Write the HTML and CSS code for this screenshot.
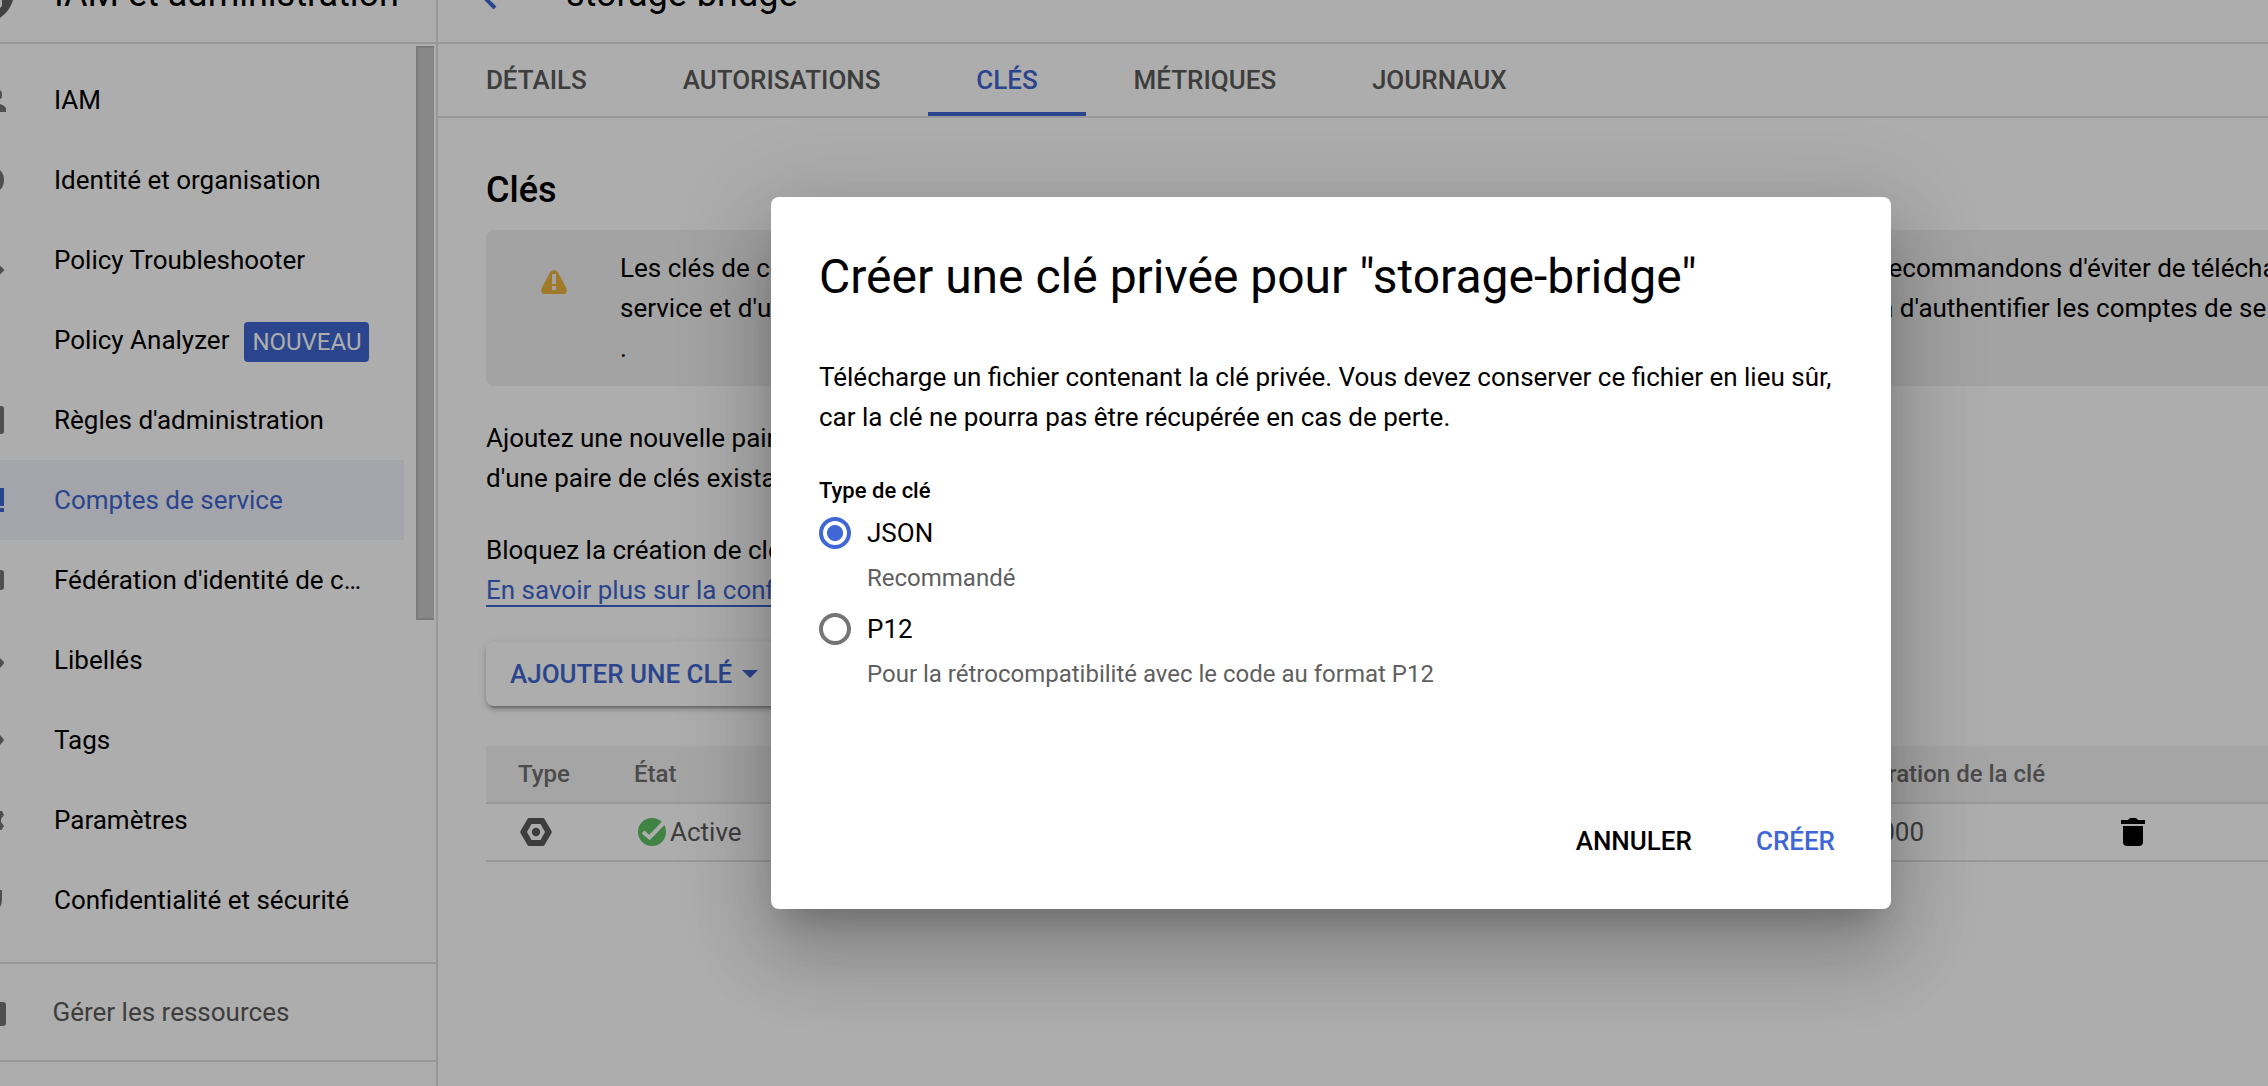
FILE: index.html
```html
<!DOCTYPE html>
<html lang="fr">
<head>
<meta charset="utf-8">
<title>IAM et administration – storage-bridge</title>
<link rel="stylesheet" href="styles.css">
</head>
<body>
<div class="app">
  <aside class="sidebar">
    <div class="sidebar-header">
      <svg class="product-icon" viewBox="0 0 14 42"><path d="M0 0H13Q10 11 0 18Z"/><path class="cut" d="M0 0H2V6L0 8Z"/></svg>
      <span class="product-title">IAM et administration</span>
    </div>
    <div class="sidebar-body">
      <nav class="nav">
        <a class="nav-item"><svg viewBox="0 0 8 80"><path d="M0 30Q2 31 2 35T0 39ZM0 44Q6 46 6 49V52H0Z"/></svg>IAM</a>
        <a class="nav-item"><svg viewBox="0 0 8 80"><path d="M0 30Q4 34 4 40T0 50Z"/></svg>Identité et organisation</a>
        <a class="nav-item"><svg viewBox="0 0 8 80"><path d="M0 45.500L4.500 50L0 54.500Z"/></svg>Policy Troubleshooter</a>
        <a class="nav-item"><svg viewBox="0 0 8 80"></svg>Policy Analyzer<span class="badge">NOUVEAU</span></a>
        <a class="nav-item"><svg viewBox="0 0 8 80"><path d="M0 26H1Q4 26 4 29V51Q4 54 1 54H0Z"/></svg>Règles d'administration</a>
        <a class="nav-item active"><svg viewBox="0 0 8 80"><path d="M0 28H4V46H0ZM0 48H4V52H0Z"/></svg>Comptes de service</a>
        <a class="nav-item"><svg viewBox="0 0 8 80"><path d="M0 30H1Q4 30 4 33V47Q4 50 1 50H0Z"/></svg>Fédération d'identité de c…</a>
        <a class="nav-item"><svg viewBox="0 0 8 80"><path d="M0 38L3.500 41.500Q4.500 43 3.500 44L0 48Z"/></svg>Libellés</a>
        <a class="nav-item"><svg viewBox="0 0 8 80"><path d="M0 35L3.500 39Q4 40 3.500 41L0 45Z"/></svg>Tags</a>
        <a class="nav-item"><svg viewBox="0 0 8 80"><path d="M0 31L2 31L4 35L1 39V42L4 46L1.500 50H0Z"/></svg>Paramètres</a>
        <a class="nav-item"><svg viewBox="0 0 8 80"><path d="M0 30H2V40Q2 44 0 47Z"/></svg>Confidentialité et sécurité</a>
      </nav>
      <div class="scroll-track"><div class="scroll-thumb"></div></div>
    </div>
    <a class="manage"><svg viewBox="0 0 8 80"><path d="M0 30H3Q6 30 6 33V51Q6 54 3 54H0Z"/></svg>Gérer les ressources</a>
  </aside>

  <main class="main">
    <header class="page-header">
      <svg class="back" viewBox="0 0 32 32"><path d="M16 2L2 16L16 30M2 16H30"/></svg>
      <h1>storage-bridge</h1>
    </header>
    <nav class="tabs">
      <a class="tab">DÉTAILS</a>
      <a class="tab">AUTORISATIONS</a>
      <a class="tab selected">CLÉS</a>
      <a class="tab">MÉTRIQUES</a>
      <a class="tab">JOURNAUX</a>
    </nav>
    <section class="content">
      <h2>Clés</h2>
      <div class="notice">
        <svg class="warning" viewBox="0 0 26 24"><path class="sign" d="M13 0Q15.500 0 17 2.500L25.300 18Q27 24 22 24H4Q-1 24 .7 18L9 2.500Q10.500 0 13 0Z"/><path class="mark" d="M11 4H15V14H11ZM11 16H15V20H11Z"/></svg>
        <div class="notice-text">
          <div class="line"><span class="lead">Les clés de co</span><span class="tail">recommandons d'éviter de télécha</span></div>
          <div class="line"><span class="lead">service et d'uti</span><span class="tail tail-b">n d'authentifier les comptes de se</span></div>
          <div class="line">.</div>
        </div>
      </div>
      <p>Ajoutez une nouvelle paire<br>d'une paire de clés existan</p>
      <p>Bloquez la création de clés<br><a class="link">En savoir plus sur la confi</a></p>
      <button class="add-key">AJOUTER UNE CLÉ<svg viewBox="0 0 16 8"><path d="M0 0H16L8 8Z"/></svg></button>
      <div class="table">
        <div class="row head">
          <span class="c-type">Type</span><span class="c-state">État</span><span class="c-exp">Expiration de la clé</span>
        </div>
        <div class="row">
          <span class="c-type"><svg class="hex" viewBox="0 0 32 28"><path fill-rule="evenodd" d="M9 0H23Q24 0 24.500 1L31.500 13Q32 14 31.500 15L24.500 27Q24 28 23 28H9Q8 28 7.500 27L.5 15Q0 14 .5 13L7.500 1Q8 0 9 0ZM11.500 6L7 14L11.500 22H20.500L25 14L20.500 6Z"/><circle cx="16" cy="14" r="4.200"/></svg></span>
          <span class="c-state"><svg class="check" viewBox="0 0 28 28"><circle cx="14" cy="14" r="14"/><path d="M5 14L11.500 19.500L25.500 5"/></svg>Active</span>
          <span class="c-exp value">10000</span>
          <svg class="trash" viewBox="0 0 24 28"><path d="M7 2L9 0H15L17 2H24V6H0V2ZM2 8H22V24Q22 28 18 28H6Q2 28 2 24Z"/></svg>
        </div>
      </div>
    </section>
  </main>
</div>

<div class="scrim">
  <div class="dialog" role="dialog">
    <h3>Créer une clé privée pour "storage-bridge"</h3>
    <p class="dialog-text">Télécharge un fichier contenant la clé privée. Vous devez conserver ce fichier en lieu sûr,<br>car la clé ne pourra pas être récupérée en cas de perte.</p>
    <div class="field-label">Type de clé</div>
    <div class="option"><span class="radio on"></span><span class="name">JSON</span></div>
    <div class="hint">Recommandé</div>
    <div class="option"><span class="radio"></span><span class="name">P12</span></div>
    <div class="hint">Pour la rétrocompatibilité avec le code au format P12</div>
    <div class="actions"><a>ANNULER</a><a class="primary">CRÉER</a></div>
  </div>
</div>
</body>
</html>
```
FILE: styles.css
```css
* { box-sizing: border-box; }

body {
  margin: 0;
  width: 2268px;
  height: 1086px;
  overflow: hidden;
  font: 26px/40px Roboto, sans-serif;
  color: #000;
  background: #fff;
}

h1, h2, h3, p { margin: 0; font-weight: 400; }
svg { display: block; flex: none; }

.app { display: flex; height: 1086px; overflow: hidden; }

/* Sidebar */
.sidebar { width: 438px; flex: none; border-right: 2px solid #e0e0e0; }
.sidebar-header {
  height: 44px;
  display: flex;
  align-items: flex-start;
  border-bottom: 2px solid #e0e0e0;
  overflow: hidden;
}
.product-icon { width: 14px; height: 42px; fill: #616161; }
.product-icon .cut { fill: #fff; }
.product-title { margin: -26px 0 0 40px; font-size: 36px; white-space: nowrap; }

.sidebar-body { display: flex; height: 918px; }
.nav { width: 404px; padding-top: 16px; }
.nav-item { display: flex; align-items: center; height: 80px; white-space: nowrap; }
.nav-item svg, .manage svg { width: 8px; height: 80px; margin-right: 46px; fill: #757575; }
.nav-item.active { background: #f0f3fb; color: #3e66d0; }
.nav-item.active svg { fill: #3e66d0; }
.badge {
  width: 125px;
  height: 40px;
  margin: 4px 0 0 15px;
  border-radius: 4px;
  background: #3e66d0;
  color: #fff;
  font-size: 24px;
  text-align: center;
}
.scroll-track { width: 20px; margin-left: 12px; padding-top: 2px; }
.scroll-thumb {
  width: 18px;
  height: 574px;
  background: #c9c9c9;
  border: 2px solid #b4b4b4;
  border-right: 0;
}
.manage {
  height: 100px;
  display: flex;
  align-items: center;
  border-top: 2px solid #e0e0e0;
  border-bottom: 2px solid #e0e0e0;
  color: #5a5a5a;
}
.manage svg { margin-right: 44.500px; }

/* Page header and tabs */
.main { flex: 1; min-width: 0; overflow: hidden; }
.page-header {
  height: 44px;
  display: flex;
  align-items: flex-start;
  padding-left: 41px;
  border-bottom: 2px solid #e0e0e0;
  overflow: hidden;
}
.back { width: 32px; height: 32px; margin-top: -22px; fill: none; stroke: #3e66d0; stroke-width: 4; }
.page-header h1 { margin: -26px 0 0 55px; font-size: 36px; line-height: 40px; }
.tabs { height: 74px; display: flex; border-bottom: 2px solid #e0e0e0; }
.tab { height: 72px; padding: 0 47.900px; line-height: 72px; font-weight: 500; color: #5a5a5a; }
.tab.selected { color: #3e66d0; box-shadow: inset 0 -4px #3e66d0; }

/* Content */
.content { padding: 52px 0 0 48px; }
.content h2 { font-size: 36px; line-height: 40px; font-weight: 500; }
.notice {
  display: flex;
  height: 156px;
  margin: 20px 0 32px;
  padding: 18px 0 0 55px;
  border-radius: 8px 0 0 8px;
  background: #f0f0f0;
}
.warning { width: 26px; height: 24px; margin: 22px 53px 0 0; }
.warning .sign { fill: #ebb43c; }
.warning .mark { fill: #f0f0f0; }
.line { display: flex; height: 40px; white-space: nowrap; }
.lead { flex: none; width: 1260px; }
.tail-b { margin-left: -1px; }
.content p { margin-bottom: 32px; white-space: nowrap; }
.link { color: #3e66d0; border-bottom: 2px solid #3e66d0; }
.add-key {
  display: flex;
  align-items: center;
  gap: 10px;
  height: 64px;
  padding: 0 24px;
  border: 0;
  border-radius: 8px;
  background: #fff;
  box-shadow: 0 6px 2px -4px rgba(0,0,0,.2), 0 4px 4px rgba(0,0,0,.14), 0 2px 10px rgba(0,0,0,.12);
  color: #3e66d0;
  font: 500 26px/40px Roboto, sans-serif;
}
.add-key svg { width: 16px; height: 8px; fill: #3e66d0; }

.table { margin-top: 40px; }
.row {
  display: flex;
  align-items: center;
  height: 58px;
  padding-left: 32px;
  border-bottom: 2px solid #e0e0e0;
  color: #5a5a5a;
  white-space: nowrap;
}
.row.head { background: #f3f3f3; color: #6f6f6f; font-size: 24px; font-weight: 500; }
.c-type { width: 116px; }
.c-state { width: 1193px; display: flex; align-items: center; }
.c-exp { width: 218px; text-align: right; }
.c-exp.value { width: 97px; margin-right: 197px; }
.hex { width: 32px; height: 28px; margin-left: 2px; fill: #5a5a5a; }
.check { width: 28px; height: 28px; margin: 0 4px 0 4px; fill: #60c264; }
.check path { fill: none; stroke: #fff; stroke-width: 4; }
.trash { width: 24px; height: 28px; fill: #000; }

/* Dialog */
.scrim { position: absolute; inset: 0; background: rgba(0,0,0,.32); }
.dialog {
  position: absolute;
  left: 771px;
  top: 197px;
  width: 1120px;
  height: 712px;
  padding: 48px;
  border-radius: 8px;
  background: #fff;
  box-shadow: 0 22px 30px -14px rgba(0,0,0,.2), 0 48px 76px 6px rgba(0,0,0,.14), 0 18px 92px 16px rgba(0,0,0,.12);
}
.dialog h3 { font-size: 48px; line-height: 64px; white-space: nowrap; }
.dialog-text { margin-top: 48px; white-space: nowrap; }
.field-label { margin-top: 38px; font-size: 22px; line-height: 31px; font-weight: 500; }
.option { display: flex; align-items: center; gap: 16px; height: 48px; margin-top: 3px; }
.radio { width: 32px; height: 32px; border: 4px solid #757575; border-radius: 50%; }
.radio.on { border-color: #4067d6; background: radial-gradient(circle, #4067d6 7.600px, #fff 8.400px); }
.hint { height: 45px; padding-left: 48px; font-size: 24px; line-height: 42px; color: #5f5f5f; }
.actions { display: flex; justify-content: flex-end; gap: 64px; margin: 123px 8px 0 0; font-weight: 500; }
.primary { color: #4067d6; }
```
